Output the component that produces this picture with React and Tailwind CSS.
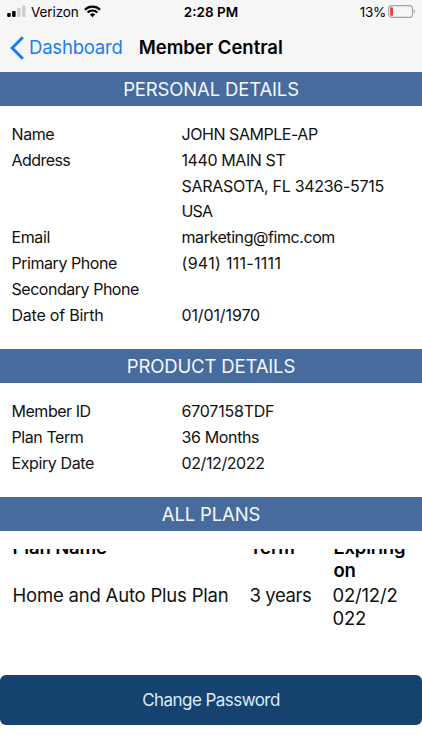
const personalDetails = [
  {
    label: 'Name',
    labelTracking: 'tracking-[-0.4px]',
    lines: [{ text: 'JOHN SAMPLE-AP', tracking: 'tracking-[-0.45px]' }],
  },
  {
    label: 'Address',
    labelTracking: 'tracking-[-0.55px]',
    lines: [
      { text: '1440 MAIN ST', tracking: 'tracking-[-0.4px]' },
      { text: 'SARASOTA, FL 34236-5715', tracking: 'tracking-[-0.28px]' },
      { text: 'USA', tracking: 'tracking-[-0.8px]' },
    ],
  },
  {
    label: 'Email',
    labelTracking: 'tracking-[-0.4px]',
    lines: [{ text: 'marketing@fimc.com', tracking: 'tracking-[-0.43px]' }],
  },
  {
    label: 'Primary Phone',
    labelTracking: 'tracking-[-0.45px]',
    lines: [{ text: '(941) 111-1111', tracking: 'tracking-[0.3px]' }],
  },
  { label: 'Secondary Phone', labelTracking: 'tracking-[-0.47px]', lines: [] },
  {
    label: 'Date of Birth',
    labelTracking: 'tracking-[-0.22px]',
    lines: [{ text: '01/01/1970', tracking: 'tracking-[-0.12px]' }],
  },
];

const productDetails = [
  {
    label: 'Member ID',
    labelTracking: 'tracking-[-0.47px]',
    lines: [{ text: '6707158TDF', tracking: 'tracking-[-0.22px]' }],
  },
  {
    label: 'Plan Term',
    labelTracking: 'tracking-[-0.43px]',
    lines: [{ text: '36 Months', tracking: 'tracking-[-0.36px]' }],
  },
  {
    label: 'Expiry Date',
    labelTracking: 'tracking-[-0.4px]',
    lines: [{ text: '02/12/2022', tracking: 'tracking-[-0.4px]' }],
  },
];

function SignalIcon() {
  return (
    <svg className="mb-0.5" width="19" height="12" viewBox="0 0 19 12">
      <rect x="0.2" y="7.9" width="3.5" height="4" rx="0.8" fill="#000" />
      <rect x="5.1" y="5.9" width="3.5" height="6" rx="0.8" fill="#000" />
      <rect x="10.1" y="3.1" width="3.5" height="8.8" rx="0.8" fill="#cfcfd1" />
      <rect x="15.1" y="0.5" width="3.5" height="11.4" rx="0.8" fill="#cfcfd1" />
    </svg>
  );
}

function WifiIcon() {
  return (
    <svg className="mb-0.5 ml-[5px]" width="17" height="13" viewBox="0 0 17 13" fill="none" stroke="#000" strokeWidth="2.2">
      <path d="M0.9 4.7a10.8 10.8 0 0 1 15.2 0" />
      <path d="M3.6 7.5a7 7 0 0 1 9.8 0" />
      <path d="M8.5 12.2 5.9 9.6a3.7 3.7 0 0 1 5.2 0z" fill="#000" stroke="none" />
    </svg>
  );
}

function BatteryIcon() {
  return (
    <svg className="mb-px" width="27" height="13" viewBox="0 0 27 13">
      <rect x="0.7" y="0.6" width="23.8" height="11.8" rx="3" fill="none" stroke="#a3a3a5" strokeWidth="1.1" />
      <rect x="2.2" y="2.2" width="2.8" height="8.6" rx="0.9" fill="#ee3b30" />
      <path d="M25.6 4.5c1 .4 1.3 1.2 1.3 2s-.3 1.6-1.3 2z" fill="#a3a3a5" />
    </svg>
  );
}

function SectionTitle({ children }) {
  return (
    <h2 className="flex h-[34px] shrink-0 items-center justify-center bg-[#486b9d] text-[18.5px] leading-[34px] tracking-[-0.15px] text-[#f4f8ff]">
      {children}
    </h2>
  );
}

function DetailList({ items }) {
  return (
    <dl className="px-[11.5px] text-base leading-[25.85px]">
      {items.map((item) => (
        <div key={item.label} className="flex">
          <dt className="w-[170px] shrink-0">
            <span className={item.labelTracking}>{item.label}</span>
          </dt>
          <dd>
            {item.lines.map((line) => (
              <div key={line.text}>
                <span className={line.tracking}>{line.text}</span>
              </div>
            ))}
          </dd>
        </div>
      ))}
    </dl>
  );
}

export default function App() {
  return (
    <div className="flex h-[750px] w-[422px] flex-col overflow-hidden bg-white font-['Inter','Liberation_Sans',sans-serif] text-[#111]">
      <header className="h-[72px] shrink-0 bg-[#f7f6f7] text-black">
        <div className="grid h-6 grid-cols-3 items-center px-[7px] text-[13.5px]">
          <div className="flex items-center">
            <SignalIcon />
            <span className="ml-[5px] tracking-[-0.1px]">Verizon</span>
            <WifiIcon />
          </div>
          <div className="text-center font-semibold">2:28 PM</div>
          <div className="flex items-center justify-end">
            <span className="mr-0.5 tracking-[-0.3px]">13%</span>
            <BatteryIcon />
          </div>
        </div>
        <div className="flex h-12 items-center pl-2.5">
          <a href="#dashboard" className="flex items-center text-[#1a7df5]">
            <svg width="14" height="24" viewBox="0 0 14 24" fill="none" stroke="currentColor" strokeWidth="3">
              <path d="M12.8 1.2 2.2 12 12.8 22.8" />
            </svg>
            <span className="ml-[5px] text-[18.5px] tracking-[-0.2px]">Dashboard</span>
          </a>
          <h1 className="ml-4 text-[18.5px] font-semibold">Member Central</h1>
        </div>
      </header>

      <SectionTitle>PERSONAL DETAILS</SectionTitle>
      <div className="h-[243px] shrink-0 pt-[15.85px]">
        <DetailList items={personalDetails} />
      </div>

      <SectionTitle>PRODUCT DETAILS</SectionTitle>
      <div className="h-[114px] shrink-0 pt-[15.85px]">
        <DetailList items={productDetails} />
      </div>

      <SectionTitle>ALL PLANS</SectionTitle>
      {/* the list is scrolled a little, so the header row is cut off at the top */}
      <div className="mt-[18px] h-[126px] shrink-0 overflow-hidden">
        <table className="-mt-[13px] w-[411px] table-fixed text-left text-[18.5px] leading-[23px]">
          <colgroup>
            <col className="w-[249.5px]" />
            <col className="w-[83px]" />
            <col className="w-[78.5px]" />
          </colgroup>
          <thead>
            <tr className="align-top text-black">
              <th className="pl-[12.5px] font-semibold tracking-[-0.15px]">Plan Name</th>
              <th className="font-semibold tracking-[-0.15px]">Term</th>
              <th className="pb-0.5 pl-px font-semibold tracking-[-0.2px]">
                Expiring
                <br />
                on
              </th>
            </tr>
          </thead>
          <tbody>
            <tr className="align-top">
              <td className="pl-[12.5px] tracking-[-0.2px] whitespace-nowrap">Home and Auto Plus Plan</td>
              <td className="tracking-[-0.4px] whitespace-nowrap">3 years</td>
              <td className="leading-[22.5px] tracking-[-0.2px]">
                02/12/2
                <br />
                022
              </td>
            </tr>
          </tbody>
        </table>
      </div>

      <button className="h-[50px] shrink-0 rounded-md bg-[#16426f] pt-0.5 text-[17px] tracking-[-0.55px] text-[#dcecff]">
        Change Password
      </button>
    </div>
  );
}
